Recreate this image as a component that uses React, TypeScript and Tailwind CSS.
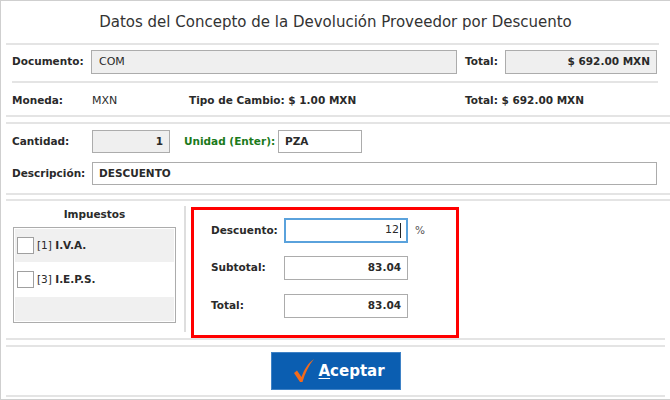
import React from "react";

function Line({ cls }: { cls: string }) {
  return <div className={"h-[2px] bg-[#e4e4e4] shrink-0 " + cls} />;
}

function Check() {
  return (
    <svg width="22" height="26" viewBox="0 0 22 26">
      <path
        d="M1 15 L4 12.5 L8.5 19 C11 12 15 5 21 1 C16 7 12 15 9.5 24 L7 24 Z"
        fill="#f26a1b"
      />
    </svg>
  );
}

export default function App() {
  const font = "[font-family:'DejaVu_Sans',sans-serif]";
  return (
    <div
      className={
        "w-[670px] h-[400px] bg-white border-l border-t border-b border-[#cfcfcf] flex flex-col text-[#2a2a2a] overflow-hidden whitespace-nowrap " +
        font
      }
    >
      <div className="h-[42px] shrink-0 flex items-center justify-center text-[15px] text-[#333] pt-[1px]">
        Datos del Concepto de la Devolución Proveedor por Descuento
      </div>
      <Line cls="ml-[5px] w-[653px]" />

      {/* Documento row */}
      <div className="mt-[5px] h-[24px] shrink-0 flex items-center text-[10.5px] font-bold">
        <div className="pl-[11px] w-[90px]">Documento:</div>
        <div className="w-[366px] h-[24px] bg-[#efefef] border border-[#acacac] flex items-center pl-[7px] font-normal text-[11px]">
          COM
        </div>
        <div className="w-[48px] pl-[8px]">Total:</div>
        <div className="w-[152px] h-[24px] bg-[#efefef] border border-[#acacac] flex items-center justify-end pr-[6px] font-bold">
          $ 692.00 MXN
        </div>
      </div>
      <Line cls="mt-[7px] ml-[11px] w-[646px]" />

      {/* Moneda row */}
      <div className="h-[32px] shrink-0 flex items-center pt-[4px] text-[10.5px]">
        <div className="pl-[11px] w-[91px] font-bold">Moneda:</div>
        <div className="w-[97px] text-[11px]">MXN</div>
        <div className="w-[276px] font-bold">Tipo de Cambio: $ 1.00 MXN</div>
        <div className="font-bold">Total: $ 692.00 MXN</div>
      </div>
      <Line cls="ml-[5px] w-[665px]" />
      <Line cls="mt-[5px] ml-[5px] w-[665px]" />

      {/* Cantidad row */}
      <div className="mt-[6px] h-[23px] shrink-0 flex items-center text-[10.5px] font-bold">
        <div className="pl-[11px] w-[91px]">Cantidad:</div>
        <div className="w-[78px] h-[23px] bg-[#efefef] border border-[#acacac] flex items-center justify-end pr-[6px]">
          1
        </div>
        <div className="w-[108px] pl-[14px] text-[#1b7a1b]">Unidad (Enter):</div>
        <div className="w-[84px] h-[23px] bg-white border border-[#acacac] flex items-center pl-[6px]">
          PZA
        </div>
      </div>

      {/* Descripcion row */}
      <div className="mt-[9px] h-[23px] shrink-0 flex items-center text-[10.5px] font-bold">
        <div className="pl-[11px] w-[91px]">Descripción:</div>
        <div className="w-[565px] h-[23px] bg-white border border-[#acacac] flex items-center pl-[6px]">
          DESCUENTO
        </div>
      </div>
      <Line cls="mt-[8px] ml-[5px] w-[665px]" />
      <Line cls="mt-[4px] ml-[5px] w-[665px]" />

      {/* Bottom area */}
      <div className="h-[137px] shrink-0 flex">
        <div className="ml-[12px] w-[163px] flex flex-col">
          <div className="h-[26px] flex items-center justify-center text-[10.5px] font-bold pt-[2px]">
            Impuestos
          </div>
          <div className="h-[96px] border border-[#acacac] p-[1px] flex flex-col text-[10.5px]">
            <div className="h-[33px] bg-[#f0f0f0] flex items-center pl-[2px] gap-[3px]">
              <div className="w-[17px] h-[17px] bg-white border border-[#a0a0a0]" />
              <span>
                [1] <span className="font-bold">I.V.A.</span>
              </span>
            </div>
            <div className="h-[35px] bg-white flex items-center pl-[2px] gap-[3px]">
              <div className="w-[17px] h-[17px] bg-white border border-[#a0a0a0]" />
              <span>
                [3] <span className="font-bold">I.E.P.S.</span>
              </span>
            </div>
            <div className="flex-1 bg-[#f0f0f0]" />
          </div>
        </div>
        <div className="ml-[8px] mt-[5px] w-[2px] h-[126px] bg-[#dedede]" />
        <div className="ml-[5px] mt-[6px] w-[268px] h-[131px] border-[3px] border-[#ff0000] flex flex-col pl-[17px] pt-[8px] text-[10.5px] font-bold">
          <div className="h-[25px] flex items-center">
            <div className="w-[73px]">Descuento:</div>
            <div className="w-[124px] h-[25px] bg-white border-2 border-[#5aa2dc] flex items-center justify-end pr-[5px] font-normal text-[11px]">
              <span>12</span>
              <span className="ml-[1px] w-[1px] h-[15px] bg-[#222]" />
            </div>
            <div className="ml-[7px] font-normal text-[#555]">%</div>
          </div>
          <div className="mt-[13px] h-[24px] flex items-center">
            <div className="w-[73px]">Subtotal:</div>
            <div className="w-[124px] h-[24px] bg-white border border-[#acacac] flex items-center justify-end pr-[6px]">
              83.04
            </div>
          </div>
          <div className="mt-[14px] h-[24px] flex items-center">
            <div className="w-[73px]">Total:</div>
            <div className="w-[124px] h-[24px] bg-white border border-[#acacac] flex items-center justify-end pr-[6px]">
              83.04
            </div>
          </div>
        </div>
      </div>
      <Line cls="ml-[5px] w-[659px]" />
      <Line cls="mt-[5px] ml-[5px] w-[659px]" />

      <div className="mt-[5px] h-[38px] shrink-0 flex justify-center">
        <div className="w-[130px] h-[38px] bg-[#0b5eb1] border border-[#3f82c6] flex items-center pl-[21px] gap-[4px] text-white font-bold text-[15px]">
          <Check />
          <span>
            <span className="underline underline-offset-2">A</span>ceptar
          </span>
        </div>
      </div>
      <Line cls="mt-[5px] ml-[5px] w-[659px]" />
    </div>
  );
}
